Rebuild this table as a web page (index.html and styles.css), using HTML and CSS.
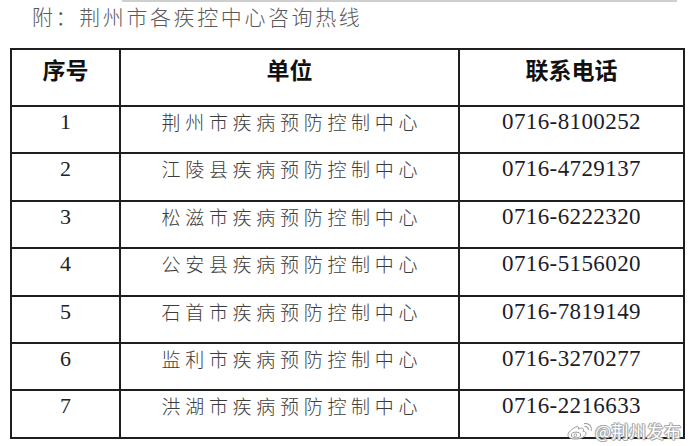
FILE: index.html
```html
<!DOCTYPE html>
<html lang="zh-CN">
<head>
<meta charset="utf-8">
<title>附：荆州市各疾控中心咨询热线</title>
<link rel="stylesheet" href="styles.css">
</head>
<body>
<div class="page">
  <div class="topline"></div>
  <h1 class="title">附：荆州市各疾控中心咨询热线</h1>
  <table class="hotline">
    <colgroup>
      <col class="c1"><col class="c2"><col class="c3">
    </colgroup>
    <thead>
      <tr><th>序号</th><th>单位</th><th>联系电话</th></tr>
    </thead>
    <tbody>
      <tr><td class="num">1</td><td class="unit">荆州市疾病预防控制中心</td><td class="tel">0716-8100252</td></tr>
      <tr><td class="num">2</td><td class="unit">江陵县疾病预防控制中心</td><td class="tel">0716-4729137</td></tr>
      <tr><td class="num">3</td><td class="unit">松滋市疾病预防控制中心</td><td class="tel">0716-6222320</td></tr>
      <tr><td class="num">4</td><td class="unit">公安县疾病预防控制中心</td><td class="tel">0716-5156020</td></tr>
      <tr><td class="num">5</td><td class="unit">石首市疾病预防控制中心</td><td class="tel">0716-7819149</td></tr>
      <tr><td class="num">6</td><td class="unit">监利市疾病预防控制中心</td><td class="tel">0716-3270277</td></tr>
      <tr><td class="num">7</td><td class="unit">洪湖市疾病预防控制中心</td><td class="tel">0716-2216633</td></tr>
    </tbody>
  </table>
  <div class="watermark">
    <svg class="wb" viewBox="0 0 28 18" width="28" height="18" aria-hidden="true">
      <path d="M11 4.5 C6 6.5 1.5 10.5 2 13.5 C2.6 16.6 8 17.6 12.5 16.8 C17.5 16 20.5 13.3 19.8 10.8 C19.4 9.4 18 9.2 17.2 9.4 C18 7.8 17.6 6.4 16.2 6.1 C15 5.9 13.4 6.6 12.4 7.1 C13 5.6 12.6 4.3 11 4.5 Z" fill="#fff" stroke="#9a9a9a" stroke-width="1"/>
      <ellipse cx="10" cy="13" rx="4.6" ry="2.9" fill="none" stroke="#9a9a9a" stroke-width="1"/>
      <circle cx="9.4" cy="13.2" r="1.4" fill="none" stroke="#9a9a9a" stroke-width="0.9"/>
      <path d="M19 4.6 C21 4.3 22.6 5.8 22.3 7.8" fill="none" stroke="#9a9a9a" stroke-width="1.1" stroke-linecap="round"/>
      <path d="M18.6 1.6 C22.8 0.9 26 4.2 25.3 8.4" fill="none" stroke="#9a9a9a" stroke-width="1.1" stroke-linecap="round"/>
    </svg>
    <span class="wbtext">@荆州发布</span>
  </div>
</div>
</body>
</html>
```
FILE: styles.css
```css
html, body {
  margin: 0;
  padding: 0;
  background: #fff;
}
.page {
  position: relative;
  width: 690px;
  height: 446px;
  overflow: hidden;
}
.topline {
  margin-left: 122px;
  width: 555px;
  height: 2px;
  background: #cfcfcf;
}
.title {
  margin: 0 0 0 32px;
  font-family: "Noto Sans CJK SC", sans-serif;
  font-weight: 300;
  font-size: 21px;
  line-height: 28px;
  letter-spacing: 2.6px;
  color: #5a5a5a;
  height: 28px;
}
.hotline {
  margin: 18px 0 0 10px;
  width: 673px;
  border-collapse: collapse;
  table-layout: fixed;
}
.c1 { width: 109px; }
.c2 { width: 339px; }
.c3 { width: 225px; }
.hotline th,
.hotline td {
  border: 2px solid #1e1e1e;
  text-align: center;
  vertical-align: top;
  padding: 0;
}
.hotline th {
  height: 57px;
  box-sizing: border-box;
  padding-top: 4px;
  font-family: "Noto Sans CJK SC", sans-serif;
  font-weight: 700;
  font-size: 23px;
  line-height: 30px;
  color: #111;
}
.hotline td {
  height: 47.4px;
  box-sizing: border-box;
  padding-top: 3px;
  line-height: 24px;
}
.num {
  font-family: "Liberation Serif", serif;
  font-size: 22px;
  color: #222;
}
.unit {
  font-family: "Noto Sans CJK SC", sans-serif;
  font-weight: 300;
  font-size: 19px;
  letter-spacing: 4.7px;
  text-indent: 4.7px;
  color: #3c3c3c;
}
.tel {
  font-family: "Liberation Serif", serif;
  font-size: 23px;
  letter-spacing: 0.4px;
  color: #1c1c2a;
}
.watermark {
  position: absolute;
  left: 566px;
  top: 421px;
  display: flex;
  align-items: center;
  gap: 1px;
}
.wb {
  display: block;
}
.wbtext {
  font-family: "Noto Sans CJK SC", sans-serif;
  font-size: 17px;
  line-height: 20px;
  color: #fff;
  letter-spacing: 0.5px;
  text-shadow:
    1px 0 0 #a8a8a8, -1px 0 0 #a8a8a8, 0 1px 0 #a8a8a8, 0 -1px 0 #a8a8a8,
    1px 1px 0 #b8b8b8, -1px -1px 0 #b8b8b8;
}
```
